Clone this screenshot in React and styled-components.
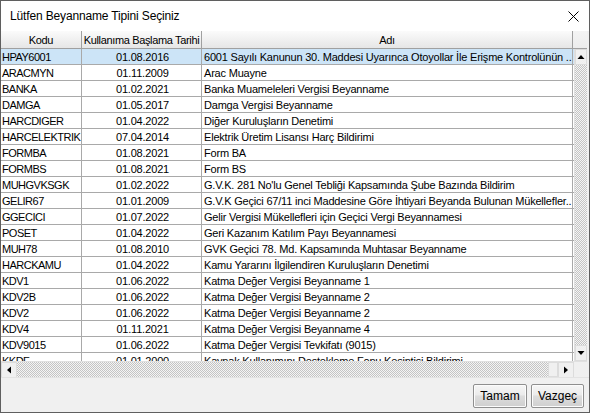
import React from "react";
import styled, { createGlobalStyle } from "styled-components";

const GlobalStyle = createGlobalStyle`
  html, body { margin: 0; padding: 0; background: #ffffff; }
  body { font-family: "Liberation Sans", Arial, sans-serif; }
  * { box-sizing: border-box; }
`;

const rows = [
  ["HPAY6001", "01.08.2016", "6001 Sayılı Kanunun 30. Maddesi Uyarınca Otoyollar İle Erişme Kontrolünün .."],
  ["ARACMYN", "01.11.2009", "Arac Muayne"],
  ["BANKA", "01.02.2021", "Banka Muameleleri Vergisi Beyanname"],
  ["DAMGA", "01.05.2017", "Damga Vergisi Beyanname"],
  ["HARCDIGER", "01.04.2022", "Diğer Kuruluşların Denetimi"],
  ["HARCELEKTRIK", "07.04.2014", "Elektrik Üretim Lisansı Harç Bildirimi"],
  ["FORMBA", "01.08.2021", "Form BA"],
  ["FORMBS", "01.08.2021", "Form BS"],
  ["MUHGVKSGK", "01.02.2022", "G.V.K. 281 No'lu Genel Tebliği Kapsamında Şube Bazında Bildirim"],
  ["GELIR67", "01.01.2009", "G.V.K Geçici 67/11 inci Maddesine Göre İhtiyari Beyanda Bulunan Mükellefler.."],
  ["GGECICI", "01.07.2022", "Gelir Vergisi Mükellefleri için Geçici Vergi Beyannamesi"],
  ["POSET", "01.04.2022", "Geri Kazanım Katılım Payı Beyannamesi"],
  ["MUH78", "01.08.2010", "GVK Geçici 78. Md. Kapsamında Muhtasar Beyanname"],
  ["HARCKAMU", "01.04.2022", "Kamu Yararını İlgilendiren Kuruluşların Denetimi"],
  ["KDV1", "01.06.2022", "Katma Değer Vergisi Beyanname 1"],
  ["KDV2B", "01.06.2022", "Katma Değer Vergisi Beyanname 2"],
  ["KDV2", "01.06.2022", "Katma Değer Vergisi Beyanname 2"],
  ["KDV4", "01.11.2021", "Katma Değer Vergisi Beyanname 4"],
  ["KDV9015", "01.06.2022", "Katma Değer Vergisi Tevkifatı (9015)"],
  ["KKDF", "01.01.2000", "Kaynak Kullanımını Destekleme Fonu Kesintisi Bildirimi"],
];

const COLS = "81px 120px 371px";

const Window = styled.div`
  width: 590px;
  height: 413px;
  border: 1px solid #5f5f5f;
  background: #f0f0f0;
  display: flex;
  flex-direction: column;
  overflow: hidden;
`;

const TitleBar = styled.div`
  height: 30px;
  flex: none;
  background: #ffffff;
  display: flex;
  align-items: center;
  justify-content: space-between;
  padding: 0 8px 0 9px;
  font-size: 12px;
  letter-spacing: -0.15px;
  color: #000;
`;

const CloseButton = styled.div`
  width: 16px;
  height: 16px;
  display: flex;
  align-items: center;
  justify-content: center;
`;

const GridFrame = styled.div`
  width: 586px;
  display: flex;
  flex-direction: column;
  background: #ffffff;
  font-size: 11px;
  letter-spacing: -0.2px;
  color: #000;
`;

const HeaderRow = styled.div`
  height: 18px;
  display: grid;
  grid-template-columns: ${COLS} 1fr;
  background: linear-gradient(#fbfbfb, #e6e6e6);
  border-bottom: 1px solid #a0a0a0;
  letter-spacing: -0.35px;
`;

const HeaderCell = styled.div`
  display: flex;
  align-items: center;
  justify-content: center;
  border-right: 1px solid ${(p) => (p.$last ? "transparent" : "#a0a0a0")};
  white-space: nowrap;
  overflow: hidden;
  padding-top: 1px;
  background: ${(p) => (p.$filler ? "linear-gradient(#f4f4f4, #ececec)" : "transparent")};
`;

const Middle = styled.div`
  display: flex;
  height: 312px;
`;

const Body = styled.div`
  width: 573px;
  overflow: hidden;
`;

const Row = styled.div`
  height: 16px;
  display: grid;
  grid-template-columns: ${COLS};
  background: ${(p) => (p.$selected ? "#cce4f7" : "#ffffff")};
  border-bottom: 1px solid #a9a9a9;
`;

const Cell = styled.div`
  display: flex;
  align-items: center;
  justify-content: ${(p) => (p.$center ? "center" : "flex-start")};
  padding: 1px 0 0 ${(p) => (p.$code ? "1px" : "2px")};
  letter-spacing: ${(p) => (p.$code ? "-0.5px" : "inherit")};
  border-right: 1px solid #a9a9a9;
  white-space: nowrap;
  overflow: hidden;
  line-height: 15px;
`;

const dotted = `
  background-color: #f4f4f4;
  background-image: repeating-conic-gradient(#c4c4c4 0 25%, #f4f4f4 0 50%);
  background-size: 2px 2px;
`;

const VScroll = styled.div`
  width: 13px;
  display: flex;
  flex-direction: column;
  border-left: 1px solid #e0e0e0;
  background: #f0f0f0;
`;

const Arrow = styled.div`
  width: ${(p) => (p.$h ? "16px" : "12px")};
  height: 16px;
  flex: none;
  display: flex;
  align-items: center;
  justify-content: center;
  background: #f0f0f0;
  border: 1px solid #dcdcdc;
`;

const Track = styled.div`
  flex: 1;
  ${dotted}
`;

const Thumb = styled.div`
  flex: none;
  width: ${(p) => p.$w || "auto"};
  background: #f0f0f0;
  border: 1px solid #dcdcdc;
`;

const HScroll = styled.div`
  height: 16px;
  display: flex;
  border-top: 1px solid #e0e0e0;
`;

const HBar = styled.div`
  width: 573px;
  display: flex;
  background: #f0f0f0;
`;

const Corner = styled.div`
  flex: 1;
  background: #f0f0f0;
`;

const Footer = styled.div`
  flex: 1;
  display: flex;
  justify-content: flex-end;
  align-items: flex-start;
  gap: 4px;
  padding: 6px 5px 0 0;
  border-top: 1px solid #e3e3e3;
`;

const Button = styled.button`
  height: 24px;
  width: ${(p) => p.$w}px;
  padding: 0;
  font-family: "Liberation Sans", Arial, sans-serif;
  font-size: 12px;
  color: #000;
  border: 1px solid #8f8f8f;
  border-radius: 2px;
  background: linear-gradient(#f6f6f6 0%, #ebebeb 45%, #dddddd 50%, #cfcfcf 100%);
  box-shadow: inset 0 0 0 1px #fcfcfc;
`;

const Tri = ({ dir }) => {
  const pts = {
    up: "0.5,6 4,2 7.5,6",
    down: "0.5,2 4,6 7.5,2",
    left: "6,0.5 2,4 6,7.5",
    right: "2,0.5 6,4 2,7.5",
  }[dir];
  return (
    <svg width="8" height="8" viewBox="0 0 8 8">
      <polygon points={pts} fill="#000" />
    </svg>
  );
};

export default function App() {
  return (
    <>
      <GlobalStyle />
      <Window>
        <TitleBar>
          <span>Lütfen Beyanname Tipini Seçiniz</span>
          <CloseButton>
            <svg width="11" height="11" viewBox="0 0 11 11">
              <path d="M0.5 0.5 L10.5 10.5 M10.5 0.5 L0.5 10.5" stroke="#000" strokeWidth="1" />
            </svg>
          </CloseButton>
        </TitleBar>
        <GridFrame>
          <HeaderRow>
            <HeaderCell>Kodu</HeaderCell>
            <HeaderCell>Kullanıma Başlama Tarihi</HeaderCell>
            <HeaderCell>Adı</HeaderCell>
            <HeaderCell $last $filler />
          </HeaderRow>
          <Middle>
            <Body>
              {rows.map((r, i) => (
                <Row key={r[0]} $selected={i === 0}>
                  <Cell $code>{r[0]}</Cell>
                  <Cell $center>{r[1]}</Cell>
                  <Cell>{r[2]}</Cell>
                </Row>
              ))}
            </Body>
            <VScroll>
              <Arrow><Tri dir="up" /></Arrow>
              <Track />
              <Arrow><Tri dir="down" /></Arrow>
            </VScroll>
          </Middle>
          <HScroll>
            <HBar>
              <Arrow $h><Tri dir="left" /></Arrow>
              <Track />
              <Thumb $w="10px" />
              <Arrow $h><Tri dir="right" /></Arrow>
            </HBar>
            <Corner />
          </HScroll>
        </GridFrame>
        <Footer>
          <Button $w={54}>Tamam</Button>
          <Button $w={53}>Vazgeç</Button>
        </Footer>
      </Window>
    </>
  );
}
